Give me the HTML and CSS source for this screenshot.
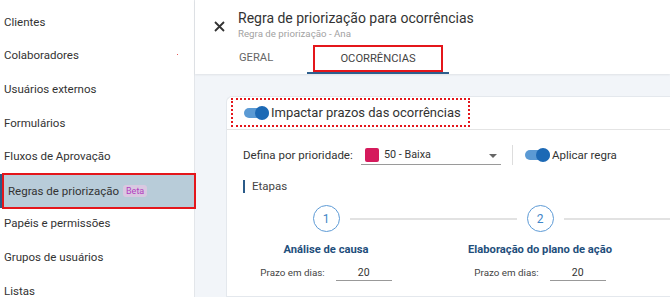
FILE: index.html
```html
<!DOCTYPE html>
<html lang="pt-BR">
<head>
  <meta charset="UTF-8">
  <title>Regra de priorização para ocorrências</title>
  <link rel="stylesheet" href="styles.css">
</head>
<body>
  <div class="app">
    <nav class="sidebar">
      <div class="nav-item">Clientes</div>
      <div class="nav-item">Colaboradores<span class="dot"></span></div>
      <div class="nav-item">Usuários externos</div>
      <div class="nav-item">Formulários</div>
      <div class="nav-item">Fluxos de Aprovação</div>
      <div class="nav-item active">Regras de priorização <span class="badge">Beta</span></div>
      <div class="nav-item">Papéis e permissões</div>
      <div class="nav-item">Grupos de usuários</div>
      <div class="nav-item">Listas</div>
    </nav>

    <main class="main">
      <header class="header">
        <svg class="close" width="11" height="11" viewBox="0 0 11 11">
          <path d="M1 1 L10 10 M10 1 L1 10" stroke="#333" stroke-width="1.8" fill="none"/>
        </svg>
        <div class="head-text">
          <div class="title">Regra de priorização para ocorrências</div>
          <div class="subtitle">Regra de priorização - Ana</div>
          <div class="tabs">
            <div class="tab">GERAL</div>
            <div class="tab current"><span class="tab-box">OCORRÊNCIAS</span></div>
          </div>
        </div>
      </header>

      <section class="content">
        <div class="card">
          <div class="card-head">
            <div class="impact">
              <span class="toggle"><span class="thumb"></span></span>
              Impactar prazos das ocorrências
            </div>
          </div>

          <div class="priority-row">
            <span class="label">Defina por prioridade:</span>
            <div class="select">
              <span class="swatch"></span>
              <span class="select-text">50 - Baixa</span>
              <span class="arrow"></span>
            </div>
            <span class="divider"></span>
            <span class="toggle"><span class="thumb"></span></span>
            <span class="apply">Aplicar regra</span>
          </div>

          <div class="section-title">Etapas</div>

          <div class="steps">
            <div class="step">
              <div class="step-head">
                <span class="line hidden"></span>
                <span class="circle">1</span>
                <span class="line"></span>
              </div>
              <div class="step-name">Análise de causa</div>
              <div class="deadline">
                <span>Prazo em dias:</span>
                <span class="days">20</span>
              </div>
            </div>
            <div class="step">
              <div class="step-head">
                <span class="line"></span>
                <span class="circle">2</span>
                <span class="line"></span>
              </div>
              <div class="step-name">Elaboração do plano de ação</div>
              <div class="deadline">
                <span>Prazo em dias:</span>
                <span class="days">20</span>
              </div>
            </div>
            <div class="step">
              <div class="step-head">
                <span class="line"></span>
              </div>
            </div>
          </div>
        </div>
      </section>
    </main>
  </div>
</body>
</html>
```

FILE: styles.css
```css
body {
  margin: 0;
  font-family: Roboto, "Liberation Sans", sans-serif;
  color: #333;
  overflow: hidden;
}
.app {
  display: flex;
  width: 670px;
  height: 297px;
  overflow: hidden;
}
.sidebar {
  width: 194px;
  flex-shrink: 0;
  border-right: 1px solid #e3e6ea;
  padding-top: 5px;
  background: #fff;
}
.nav-item {
  height: 33.6px;
  display: flex;
  align-items: center;
  padding-left: 4px;
  font-size: 11.5px;
  color: #333;
  position: relative;
  white-space: nowrap;
}
.dot {
  position: absolute;
  left: 177px;
  top: 15px;
  width: 1px;
  height: 1px;
  background: #e85a5a;
}
.nav-item.active {
  height: 32px;
  margin: 0 -2px -2.4px 2px;
  padding-left: 4px;
  border: 2px solid #e4161b;
  background: #b8ccd9;
}
.nav-item.active::before {
  content: "";
  position: absolute;
  left: -4px;
  top: -1px;
  bottom: -1px;
  width: 2px;
  background: #2c5b86;
}
.badge {
  margin-left: 4px;
  padding: 1px 3px;
  font-size: 9px;
  color: #b23fbf;
  background: #d9c8e1;
  border-radius: 3px;
}
.main {
  flex: 1;
  display: flex;
  flex-direction: column;
  background: #f2f5f9;
  min-width: 0;
}
.header {
  height: 74px;
  flex-shrink: 0;
  background: #fff;
  display: flex;
  box-shadow: 0 1px 2px rgba(0, 0, 0, 0.08);
}
.close {
  margin: 21px 0 0 19px;
}
.head-text {
  margin-left: 13px;
  padding-top: 9px;
}
.title {
  font-size: 14px;
  line-height: 18px;
  color: #333;
}
.subtitle {
  font-size: 9.7px;
  line-height: 13px;
  color: #a2a2a2;
}
.tabs {
  display: flex;
  margin-top: 5px;
  margin-left: 1px;
  height: 29px;
}
.tab {
  width: 68px;
  font-size: 11.2px;
  color: #666;
  line-height: 25px;
}
.tab.current {
  width: 142px;
  border-bottom: 2px solid #2e5f8e;
  display: flex;
  justify-content: center;
  box-sizing: border-box;
}
.tab-box {
  width: 130px;
  height: 27px;
  box-sizing: border-box;
  border: 2px solid #e4161b;
  text-align: center;
  line-height: 23px;
  color: #444;
}
.content {
  padding: 22px 0 0 32px;
  flex: 1;
}
.card {
  background: #fff;
  border: 1px solid #e4e8ed;
  border-right: none;
  border-radius: 6px 0 0 0;
  height: 100%;
  box-sizing: border-box;
  margin-left: -1px;
}
.card-head {
  height: 31px;
  border-bottom: 1px solid #e4e4e4;
  padding: 1px 0 0 4px;
}
.impact {
  width: 239px;
  height: 29px;
  box-sizing: border-box;
  border: 2px dotted #e4161b;
  display: flex;
  align-items: center;
  padding-left: 11px;
  font-size: 13px;
  color: #333;
  white-space: nowrap;
}
.toggle {
  position: relative;
  width: 25px;
  height: 10px;
  border-radius: 5px;
  background: #5b9ad4;
  margin-right: 2px;
  flex-shrink: 0;
}
.thumb {
  position: absolute;
  right: 0;
  top: -2px;
  width: 14px;
  height: 14px;
  border-radius: 50%;
  background: #1c69b5;
}
.priority-row {
  display: flex;
  align-items: center;
  padding: 16px 0 0 16px;
  height: 18px;
  font-size: 11.5px;
  white-space: nowrap;
}
.label {
  width: 118px;
  flex-shrink: 0;
  color: #333;
}
.select {
  width: 140px;
  flex-shrink: 0;
  height: 18px;
  display: flex;
  align-items: center;
  border-bottom: 1px solid #9a9a9a;
  position: relative;
}
.swatch {
  width: 14px;
  height: 14px;
  border-radius: 2px;
  background: #d51a5c;
  margin: 0 5px 0 4px;
}
.select-text {
  font-size: 10.8px;
  color: #333;
}
.arrow {
  position: absolute;
  right: 4px;
  top: 8px;
  border-left: 4px solid transparent;
  border-right: 4px solid transparent;
  border-top: 4px solid #666;
}
.divider {
  width: 1px;
  height: 20px;
  background: #ddd;
  margin: 0 12px 0 11px;
  flex-shrink: 0;
}
.apply {
  color: #333;
  font-size: 11.5px;
}
.section-title {
  margin: 16px 0 0 16px;
  padding-left: 7px;
  border-left: 2px solid #2b5b89;
  height: 13px;
  line-height: 13px;
  font-size: 11.5px;
  color: #444;
}
.steps {
  display: grid;
  grid-template-columns: repeat(3, 214px);
  margin: 12px 0 0 -8px;
}
.step-head {
  display: flex;
  align-items: center;
  height: 27px;
}
.line {
  flex: 1;
  height: 2px;
  background: #e2e2e2;
}
.line.hidden {
  visibility: hidden;
}
.circle {
  width: 27px;
  height: 27px;
  box-sizing: border-box;
  border: 1.5px solid #5e9bd6;
  border-radius: 50%;
  margin: 0 10px;
  display: flex;
  align-items: center;
  justify-content: center;
  font-size: 12px;
  color: #3f86c8;
}
.step-name {
  margin-top: 10px;
  text-align: center;
  font-size: 11.2px;
  font-weight: bold;
  color: #1f4f7c;
  line-height: 15px;
  white-space: nowrap;
}
.deadline {
  margin-top: 9px;
  display: flex;
  justify-content: center;
  align-items: flex-start;
  gap: 11px;
  font-size: 9.8px;
  color: #444;
  line-height: 13px;
  white-space: nowrap;
}
.days {
  width: 56px;
  text-align: center;
  border-bottom: 1px solid #999;
  padding-bottom: 1px;
  font-size: 10.5px;
  color: #333;
}
```
